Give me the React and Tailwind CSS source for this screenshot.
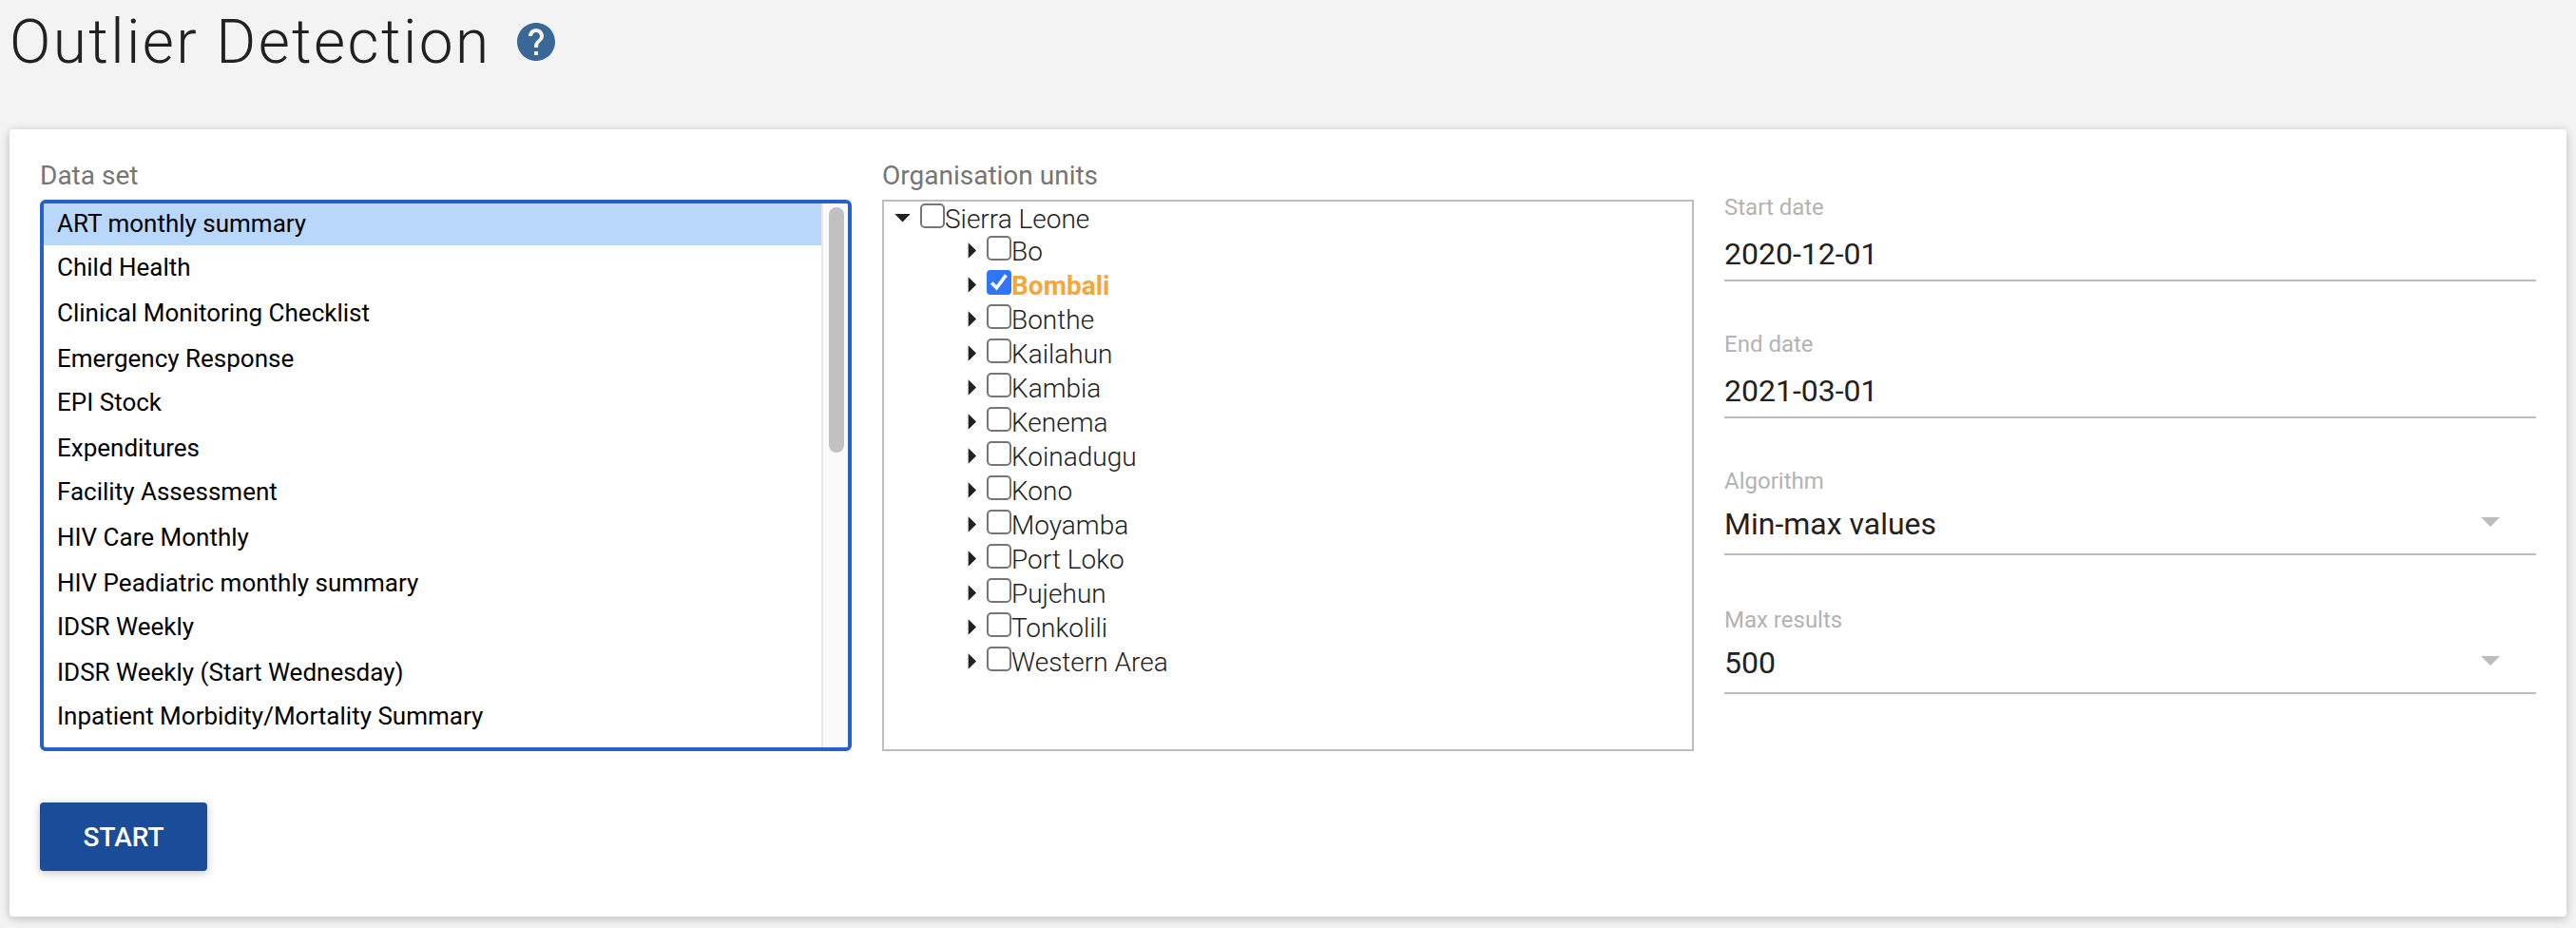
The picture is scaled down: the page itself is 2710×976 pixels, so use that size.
const dataSets = [
  ['ART monthly summary', 'h-[46px]'],
  ['Child Health', 'h-12'],
  ['Clinical Monitoring Checklist', 'h-12'],
  ['Emergency Response', 'h-[46px]'],
  ['EPI Stock', 'h-12'],
  ['Expenditures', 'h-[46px]'],
  ['Facility Assessment', 'h-12'],
  ['HIV Care Monthly', 'h-12'],
  ['HIV Peadiatric monthly summary', 'h-[46px]'],
  ['IDSR Weekly', 'h-12'],
  ['IDSR Weekly (Start Wednesday)', 'h-[46px]'],
  ['Inpatient Morbidity/Mortality Summary', 'h-[46px]'],
];

const districts = [
  'Bo', 'Bombali', 'Bonthe', 'Kailahun', 'Kambia', 'Kenema', 'Koinadugu',
  'Kono', 'Moyamba', 'Port Loko', 'Pujehun', 'Tonkolili', 'Western Area',
];

function HelpIcon() {
  return (
    <svg className="size-12" viewBox="0 0 24 24" fill="#3a6896">
      <path d="M12 2C6.48 2 2 6.48 2 12s4.48 10 10 10 10-4.48 10-10S17.52 2 12 2zm1 17h-2v-2h2v2zm2.07-7.75l-.9.92C13.45 12.9 13 13.5 13 15h-2v-.5c0-1.1.45-2.1 1.17-2.83l1.24-1.26c.37-.36.59-.86.59-1.41 0-1.1-.9-2-2-2s-2 .9-2 2H8c0-2.21 1.79-4 4-4s4 1.79 4 4c0 .88-.36 1.68-.93 2.25z" />
    </svg>
  );
}

function Checkbox({ checked }) {
  if (!checked) {
    return <span className="mt-[2px] size-[26px] shrink-0 rounded-[5px] border-2 border-[#767676] bg-white" />;
  }
  return (
    <svg className="mt-[2px] size-[26px] shrink-0" viewBox="0 0 26 26">
      <rect width="26" height="26" rx="4" fill="#2f76f6" />
      <path d="M5.2 13.6 L10.4 18.8 L20.4 5.4" fill="none" stroke="#fff" strokeWidth="3.6" />
    </svg>
  );
}

function TreeRow({ name, open, checked }) {
  return (
    <div className={open ? 'flex h-[34px] pl-[11px]' : 'flex h-9 pl-[88px]'}>
      {open ? (
        <svg className="mt-[13px] mr-[10px] h-[9px] w-[17px]" viewBox="0 0 17 9" fill="#212121">
          <path d="M0.3 0 H16.7 L8.5 8.5 Z" />
        </svg>
      ) : (
        <svg className="mt-[9px] mr-[11px] h-[17px] w-[9px]" viewBox="0 0 9 17" fill="#212121">
          <path d="M0.7 0.3 V16.7 L9 8.5 Z" />
        </svg>
      )}
      <Checkbox checked={checked} />
      <span className={checked ? 'text-[28px] leading-[37px] font-bold text-[#f4a73b]' : 'text-[28px] leading-[37px] font-light text-[#212121]'}>
        {name}
      </span>
    </div>
  );
}

function DateField({ label, value }) {
  return (
    <div className="border-b-2 border-[#bdbdbd] pb-[5px]">
      <div className="text-2xl leading-7 text-[#b3b3b3]">{label}</div>
      <div className="mt-[13px] text-[32px] leading-[44px] text-[#212121]">{value}</div>
    </div>
  );
}

function SelectField({ label, value }) {
  return (
    <div className="border-b-2 border-[#bdbdbd] pb-[9px]">
      <div className="text-2xl leading-7 text-[#b3b3b3]">{label}</div>
      <div className="mt-[9px] flex items-start justify-between pr-[38px] text-[32px] leading-[44px] text-[#212121]">
        {value}
        <svg className="mt-[15px] h-[10px] w-5" viewBox="0 0 20 10" fill="#bdbdbd">
          <path d="M0 0 H20 L10 10 Z" />
        </svg>
      </div>
    </div>
  );
}

export default function App() {
  return (
    <div className="h-[976px] overflow-hidden bg-[#f3f3f3] px-[10px] font-[Roboto,sans-serif]">
      <header className="mb-12 flex h-[88px] items-center">
        <h1 className="w-[530px] self-start text-[64px] leading-[89px] font-light tracking-[2.4px] whitespace-nowrap text-[#212121]">Outlier Detection</h1>
        <HelpIcon />
      </header>
      <main className="h-[828px] rounded-[4px] bg-white p-8 shadow-[0_2px_12px_rgba(0,0,0,0.12),0_2px_8px_rgba(0,0,0,0.12)]">
        <div className="grid grid-cols-3 gap-8">
          <section>
            <h2 className="h-[42px] text-[28px] leading-[33px] text-[#757575]">Data set</h2>
            <div className="flex h-[580px] overflow-hidden rounded-[6px] border-4 border-[#2561c9] bg-white">
              <ul className="flex-1 text-[26px] leading-[42px] text-black">
                {dataSets.map(([name, height], i) => (
                  <li key={name} className={height}>
                    <div className={i === 0 ? 'h-11 bg-[#b9d7fb] pl-[14px]' : 'h-11 pl-[14px]'}>{name}</div>
                  </li>
                ))}
              </ul>
              <div className="w-7 border-l-2 border-[#e8e8e8] bg-[#fafafa] pt-1 pl-[6px]">
                <div className="h-[258px] w-4 rounded-full bg-[#c1c1c1]" />
              </div>
            </div>
          </section>
          <section>
            <h2 className="h-[42px] text-[28px] leading-[33px] text-[#757575]">Organisation units</h2>
            <div className="h-[580px] border-2 border-[#bdbdbd]">
              <TreeRow name="Sierra Leone" open />
              {districts.map((name) => (
                <TreeRow key={name} name={name} checked={name === 'Bombali'} />
              ))}
            </div>
          </section>
          <section className="flex flex-col pt-9">
            <DateField label="Start date" value="2020-12-01" />
            <div className="mt-[52px]"><DateField label="End date" value="2021-03-01" /></div>
            <div className="mt-[52px]"><SelectField label="Algorithm" value="Min-max values" /></div>
            <div className="mt-[54px]"><SelectField label="Max results" value="500" /></div>
          </section>
        </div>
        <button className="mt-[54px] flex h-[72px] w-[176px] items-start justify-center rounded-[4px] bg-[#1a4c97] text-[28px] leading-[74px] font-medium text-white shadow-[0_2px_12px_rgba(0,0,0,0.12),0_2px_8px_rgba(0,0,0,0.12)]">START</button>
      </main>
    </div>
  );
}
